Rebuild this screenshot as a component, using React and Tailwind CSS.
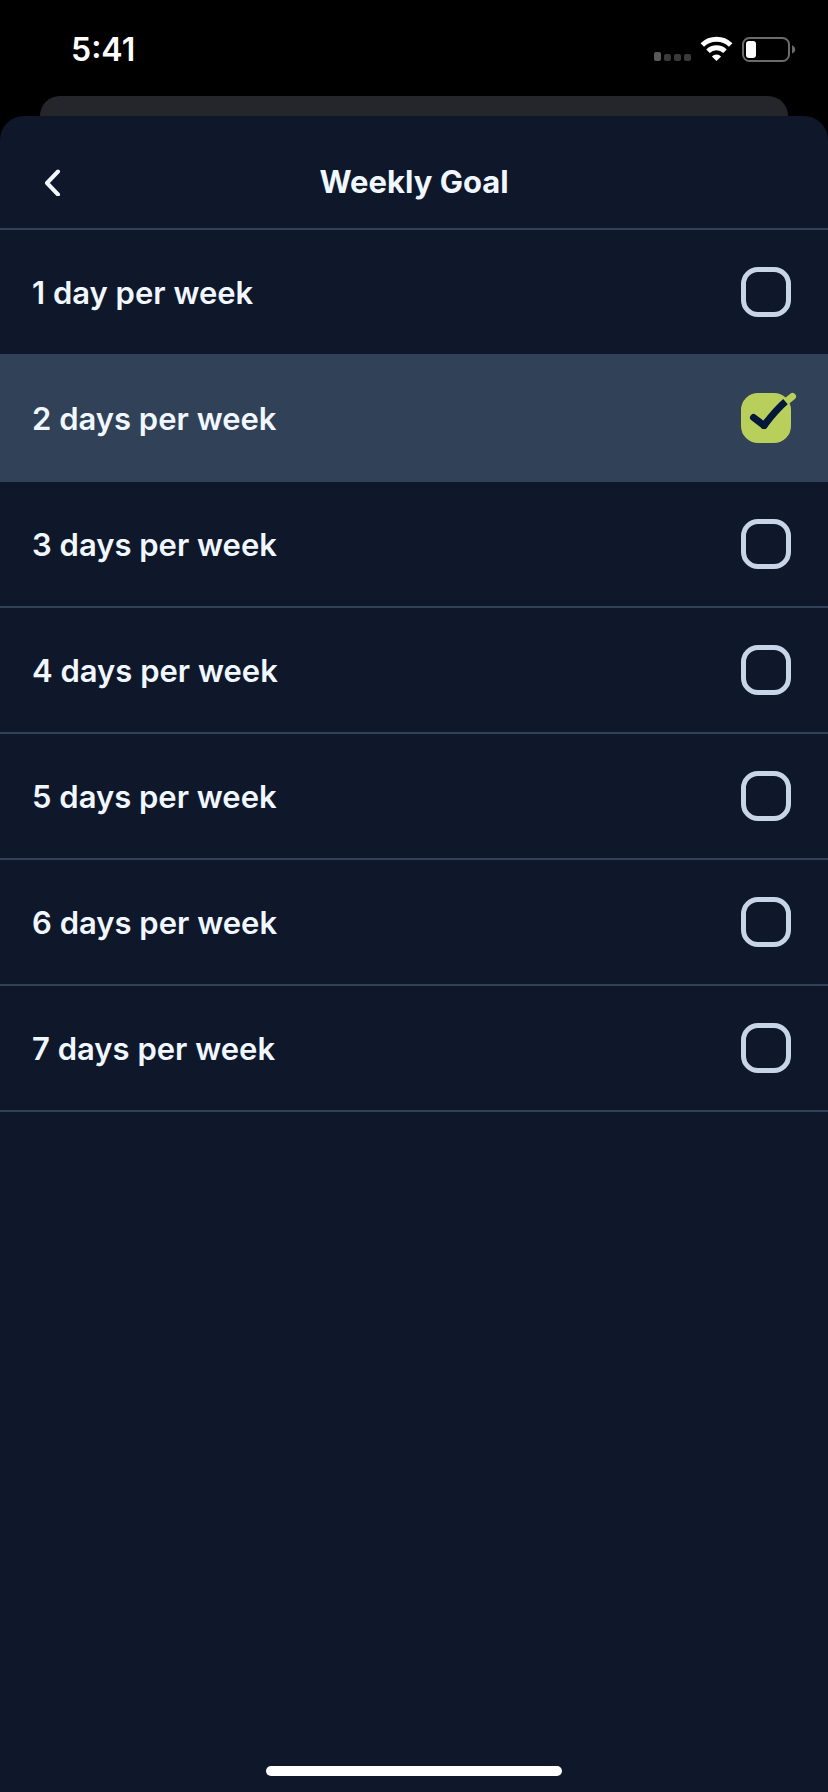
// src/pages/WeeklyGoal.jsx
import { useState } from "react";

const DAYS = [1, 2, 3, 4, 5, 6, 7];

function StatusIcons() {
  return (
    <svg width="142" height="28" viewBox="0 0 142 28" fill="none" aria-hidden="true">
      {/* no signal */}
      <rect x="0" y="16" width="7" height="9" rx="2" fill="#5a5a5a" />
      <rect x="10" y="18" width="7" height="7" rx="2" fill="#3a3a3a" />
      <rect x="20" y="18" width="7" height="7" rx="2" fill="#3a3a3a" />
      <rect x="30" y="18" width="7" height="7" rx="2" fill="#3a3a3a" />

      {/* wifi */}
      <g stroke="#fff" strokeWidth="5">
        <path d="M48.3 9a20.4 20.4 0 0 1 28.4 0" />
        <path d="M54 15.200a12.2 12.2 0 0 1 17 0" />
      </g>
      <path d="M62.5 25l-4.600-4.600a6.600 6.600 0 0 1 9.200 0z" fill="#fff" />

      {/* battery */}
      <rect x="89" y="2" width="46" height="23" rx="6.5" stroke="#6b6b6b" strokeWidth="2" />
      <rect x="92" y="5" width="10" height="17" rx="3" fill="#fff" />
      <path d="M138 9.5c2 .6 3.2 2.2 3.2 4s-1.2 3.4-3.2 4z" fill="#6b6b6b" />
    </svg>
  );
}

function GoalRow({ days, checked, onChange }) {
  return (
    <label
      className={[
        "flex cursor-pointer items-center justify-between border-b-2 border-slate-700 py-[37px] pr-[37px] pl-8",
        checked ? "bg-slate-700" : "",
      ].join(" ")}
    >
      <span className="pt-0.5 text-[31px] leading-10 font-semibold">
        {days} {days === 1 ? "day" : "days"} per week
      </span>
      <span className="relative size-[50px]">
        <input
          type="radio"
          name="weekly-goal"
          value={days}
          checked={checked}
          onChange={onChange}
          className="block size-[50px] cursor-pointer appearance-none rounded-[17px] border-[5px] border-[#c8d4e8] checked:border-[#b8cf5c] checked:bg-[#b8cf5c]"
        />
        {checked ? (
          <svg
            className="pointer-events-none absolute inset-0 overflow-visible"
            width="50"
            height="50"
            viewBox="0 0 50 50"
            fill="none"
            strokeWidth="7"
            aria-hidden="true"
          >
            <path d="M44.5 9L51.5 3.5" stroke="#b8cf5c" strokeLinecap="round" />
            <path d="M12.5 24.5L23 32.5" stroke="#04193a" strokeLinecap="round" />
            <path d="M23 32.5C30 23.5 36.5 15.5 44.5 8.7" stroke="#04193a" />
            <circle cx="23" cy="32.5" r="3.5" fill="#04193a" />
          </svg>
        ) : null}
      </span>
    </label>
  );
}

export default function App() {
  const [goal, setGoal] = useState(2);

  return (
    <div className="flex min-h-screen flex-col bg-black font-['Inter',sans-serif] text-[#f0f7ff]">
      <div className="flex h-24 items-center justify-between pt-1 pr-8 pl-[71px]">
        <span className="text-[32px] leading-10 font-semibold text-white">5:41</span>
        <StatusIcons />
      </div>

      {/* edge of the card behind the sheet */}
      <div className="mx-10 h-5 rounded-t-[20px] bg-[#25252c]" />

      <main className="flex flex-1 flex-col rounded-t-[24px] bg-slate-900">
        <header className="grid grid-cols-[1fr_auto_1fr] items-center border-b-2 border-slate-700 px-8 pt-[42px] pb-[22px]">
          <button type="button" aria-label="Back" className="flex h-12 w-10 items-center justify-center">
            <svg width="18" height="28" viewBox="0 0 18 28" fill="none" aria-hidden="true">
              <path
                d="M15 3.500L4 15L15 26.500"
                stroke="currentColor"
                strokeWidth="4"
                strokeLinecap="round"
                strokeLinejoin="round"
              />
            </svg>
          </button>
          <h1 className="text-[31px] leading-10 font-bold">Weekly Goal</h1>
        </header>

        <form>
          {DAYS.map((d) => (
            <GoalRow key={d} days={d} checked={goal === d} onChange={() => setGoal(d)} />
          ))}
        </form>

        <div className="mx-auto mt-auto mb-4 h-[10px] w-[296px] rounded-full bg-white" />
      </main>
    </div>
  );
}
